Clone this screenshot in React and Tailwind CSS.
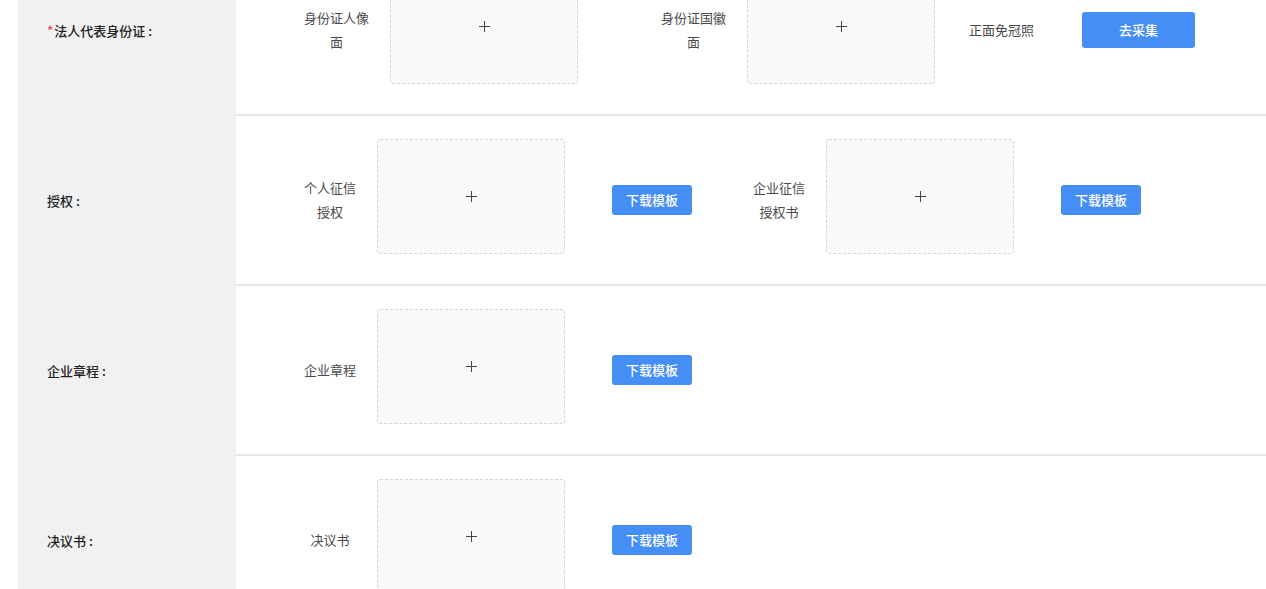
const rows = [
  {
    title: '法人代表身份证',
    required: true,
    items: [
      { type: 'upload', label: '身份证人像面', labelWidth: 'w-[65px]' },
      { type: 'upload', label: '身份证国徽面', labelWidth: 'w-[65px]', gap: 'ml-[83px]' },
      { type: 'capture', label: '正面免冠照' },
    ],
  },
  {
    title: '授权',
    items: [
      { type: 'upload', label: '个人征信授权', template: true },
      { type: 'upload', label: '企业征信授权书', template: true, gap: 'ml-[61px]' },
    ],
  },
  {
    title: '企业章程',
    items: [{ type: 'upload', label: '企业章程', template: true }],
  },
  {
    title: '决议书',
    items: [{ type: 'upload', label: '决议书', template: true }],
  },
];

function PlusIcon() {
  return (
    <svg width="12" height="12" viewBox="0 0 12 12" className="block">
      <path d="M6 0.5V11.5M0.5 6H11.5" stroke="#444" strokeWidth="1" shapeRendering="crispEdges" />
    </svg>
  );
}

function UploadBox() {
  return (
    <div className="mb-[8px] flex h-[115px] w-[188px] shrink-0 items-center justify-center rounded-[3px] border border-dashed border-[#d6d6d6] bg-[#f9f9f9]">
      <PlusIcon />
    </div>
  );
}

function BlueButton({ children, className }) {
  return (
    <button
      type="button"
      className={`flex shrink-0 items-center justify-center rounded-[3px] bg-[#458ef6] text-[13px] font-medium text-white ${className}`}
    >
      {children}
    </button>
  );
}

function UploadItem({ item }) {
  return (
    <div className={`flex items-center ${item.gap || ''}`}>
      <div className={`${item.labelWidth || 'w-[52px]'} shrink-0 text-center text-[13px] leading-[24px] text-[#4a4a4a]`}>
        {item.label}
      </div>
      <div className="ml-[21px]">
        <UploadBox />
      </div>
      {item.template && <BlueButton className="ml-[47px] h-[30px] w-[80px]">下载模板</BlueButton>}
    </div>
  );
}

export default function App() {
  return (
    <div
      className="h-[589px] w-[1266px] overflow-hidden bg-white pl-[18px]"
      style={{ fontFamily: '"Noto Sans CJK SC", "Noto Sans", sans-serif' }}
    >
      <div className="-mt-[54px] flex flex-col">
        {rows.map((row) => (
          <div key={row.title} className="flex h-[170px]">
            <div className="flex w-[218px] shrink-0 items-center bg-[#f1f1f1] pl-[29px] text-[13px] font-medium text-[#222]">
              {row.required && <span className="mr-[1px] text-[#f04b4b]">*</span>}
              <span>{row.title}</span>
              <span className="ml-[3px]">:</span>
            </div>
            <div className="flex flex-1 items-center border-b-2 border-[#e8e8e8] pl-[68px]">
              {row.items.map((item) =>
                item.type === 'capture' ? (
                  <div key={item.label} className="ml-[34px] flex items-center">
                    <span className="text-[13px] text-[#4a4a4a]">{item.label}</span>
                    <BlueButton className="ml-[48px] h-[36px] w-[113px]">去采集</BlueButton>
                  </div>
                ) : (
                  <UploadItem key={item.label} item={item} />
                ),
              )}
            </div>
          </div>
        ))}
      </div>
    </div>
  );
}
